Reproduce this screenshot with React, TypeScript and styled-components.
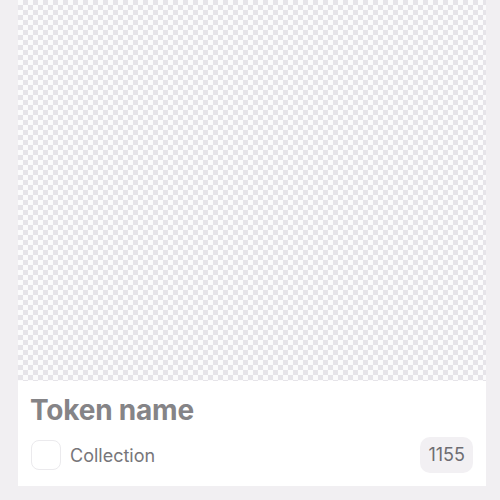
import styled, { createGlobalStyle } from "styled-components";

const GlobalStyle = createGlobalStyle`
  html, body {
    margin: 0;
    padding: 0;
    background: #f1eff2;
    font-family: Inter, "Noto Sans", sans-serif;
  }
`;

const Page = styled.div`
  width: 500px;
  height: 500px;
  padding: 0 14px 14px 18px;
  box-sizing: border-box;
  display: flex;
`;

const Card = styled.div`
  flex: 1;
  display: flex;
  flex-direction: column;
  background: #ffffff;
  overflow: hidden;
`;

const Preview = styled.div`
  height: 381px;
  background-color: #fbfbfc;
  background-image:
    linear-gradient(45deg, #e6e4e9 25%, transparent 25%),
    linear-gradient(-45deg, #e6e4e9 25%, transparent 25%),
    linear-gradient(45deg, transparent 75%, #e6e4e9 75%),
    linear-gradient(-45deg, transparent 75%, #e6e4e9 75%);
  background-size: 10px 10px;
  background-position: 0 0, 0 5px, 5px -5px, -5px 0;
`;

const Info = styled.div`
  display: flex;
  flex-direction: column;
  gap: 10px;
  padding: 12px 13px 0 12px;
`;

const Title = styled.h2`
  margin: 0;
  font-size: 28px;
  font-weight: 700;
  line-height: 34px;
  color: #858487;
  letter-spacing: -0.2px;
`;

const Row = styled.div`
  display: flex;
  align-items: center;
  justify-content: space-between;
`;

const Collection = styled.div`
  display: flex;
  align-items: center;
  gap: 9px;
  font-size: 18px;
  color: #77767a;
  padding-left: 1px;
`;

const Swatch = styled.span`
  width: 30px;
  height: 30px;
  box-sizing: border-box;
  border: 1px solid #ebeaed;
  border-radius: 8px;
  background: #ffffff;
`;

const Count = styled.span`
  padding: 7px 8px;
  border-radius: 10px;
  background: #f2f0f3;
  font-size: 18px;
  line-height: 22px;
  color: #6e6d72;
`;

export default function App() {
  return (
    <>
      <GlobalStyle />
      <Page>
        <Card>
          <Preview />
          <Info>
            <Title>Token name</Title>
            <Row>
              <Collection>
                <Swatch />
                Collection
              </Collection>
              <Count>1155</Count>
            </Row>
          </Info>
        </Card>
      </Page>
    </>
  );
}
